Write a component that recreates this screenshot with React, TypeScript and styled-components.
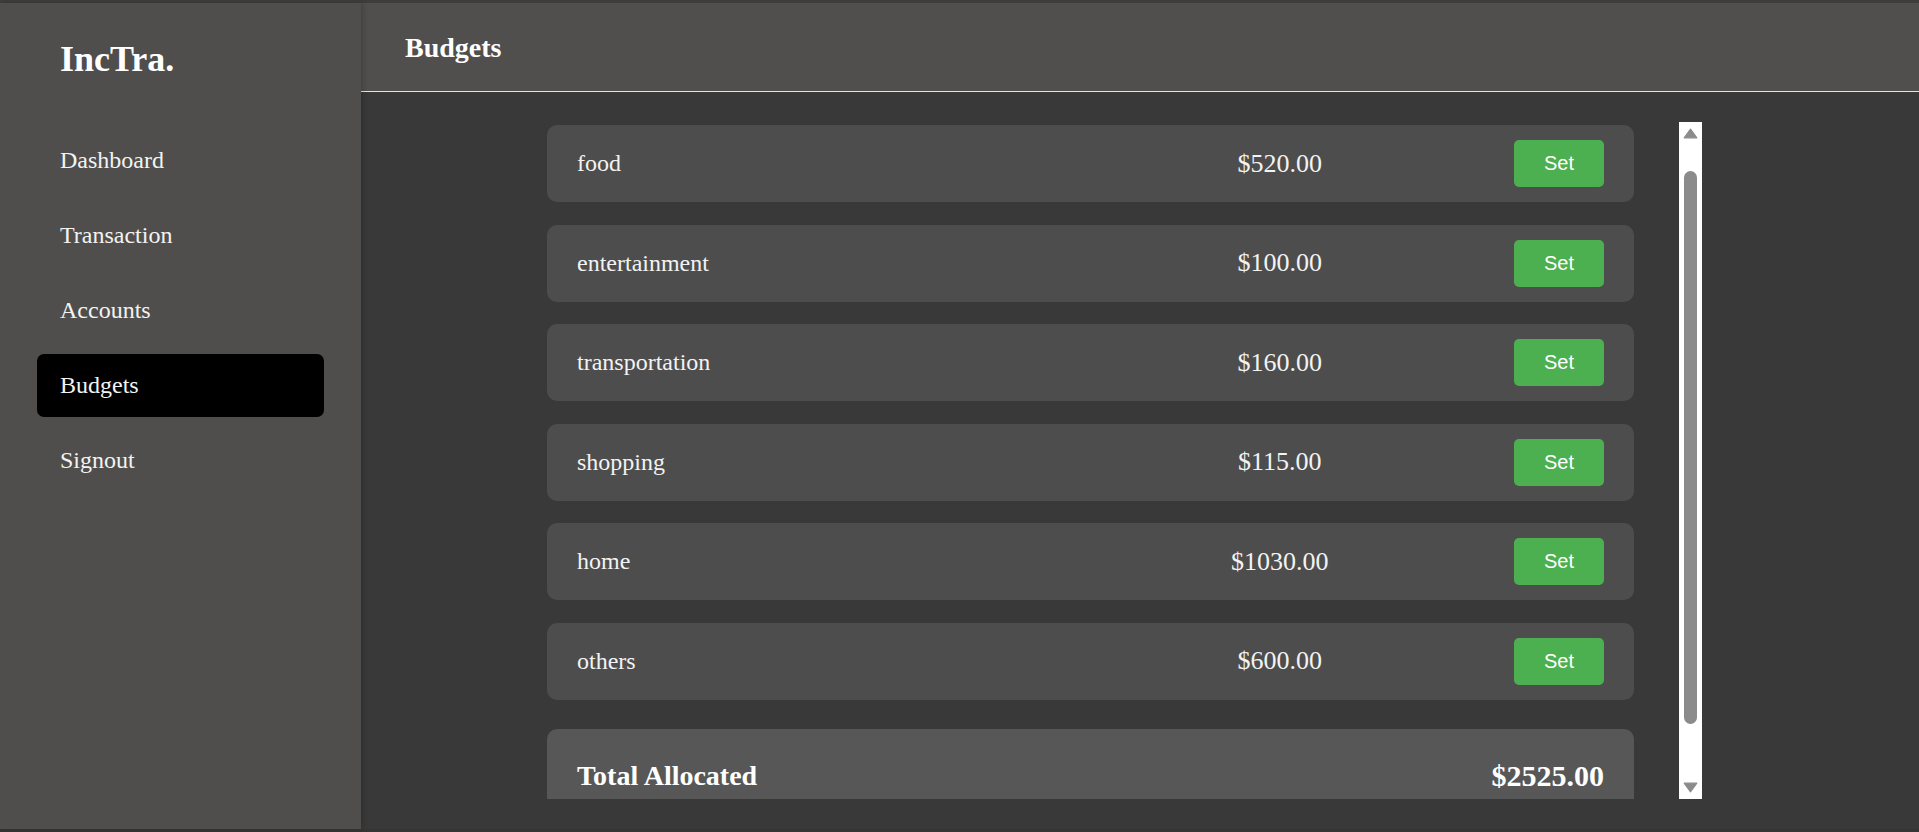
import React, { useEffect, useRef, useState } from 'react';
import styled, { createGlobalStyle } from 'styled-components';

interface Budget {
  category: string;
  amount: number;
}

const budgets: Budget[] = [
  { category: 'food', amount: 520 },
  { category: 'entertainment', amount: 100 },
  { category: 'transportation', amount: 160 },
  { category: 'shopping', amount: 115 },
  { category: 'home', amount: 1030 },
  { category: 'others', amount: 600 },
];

const navItems = ['Dashboard', 'Transaction', 'Accounts', 'Budgets', 'Signout'];

const GlobalStyle = createGlobalStyle`
  html, body {
    margin: 0;
    padding: 0;
    background: #3c3c3c;
    font-family: "Liberation Serif", "Times New Roman", serif;
    overflow: hidden;
  }
  * {
    box-sizing: border-box;
  }
`;

const Frame = styled.div`
  height: 832px;
  display: flex;
  border-top: 3px solid #3d3d3d;
  border-bottom: 3px solid #353535;
`;

const Sidebar = styled.aside`
  width: 361px;
  flex-shrink: 0;
  background: #4f4e4c;
  padding: 36px 37px 0 37px;
  box-shadow: 2px 0 5px rgba(0, 0, 0, 0.18);
  position: relative;
  z-index: 1;
`;

const Logo = styled.div`
  font-size: 36px;
  font-weight: bold;
  color: #ffffff;
  line-height: 40px;
  padding-left: 23px;
  margin-bottom: 50px;
`;

const NavList = styled.nav`
  display: flex;
  flex-direction: column;
  gap: 12.3px;
`;

const NavItem = styled.div<{ active?: boolean }>`
  height: 62.7px;
  display: flex;
  align-items: center;
  padding-left: 23px;
  border-radius: 7px;
  font-size: 24px;
  color: #f3f3f3;
  background: ${(props) => (props.active ? '#000000' : 'transparent')};
  cursor: pointer;
`;

const Main = styled.main`
  flex: 1;
  display: flex;
  flex-direction: column;
  background: #393939;
  min-width: 0;
`;

const Header = styled.header`
  height: 89px;
  flex-shrink: 0;
  display: flex;
  align-items: center;
  padding: 2px 0 0 44px;
  background: #504f4d;
  border-bottom: 1px solid #e4e4e4;
`;

const Title = styled.h1`
  margin: 0;
  font-size: 28px;
  font-weight: bold;
  color: #ffffff;
`;

const Content = styled.div`
  padding: 30px 0 0 186px;
`;

const ScrollWrap = styled.div`
  width: 1155px;
  height: 677px;
  display: flex;
`;

const ScrollArea = styled.div`
  flex: 1;
  height: 100%;
  overflow-y: scroll;
  padding: 35px 45px 39px 0;
  scrollbar-width: none;

  &::-webkit-scrollbar {
    display: none;
  }
`;

const ScrollTrack = styled.div`
  width: 23px;
  flex-shrink: 0;
  display: flex;
  flex-direction: column;
  background: #ffffff;
`;

const ArrowButton = styled.div`
  height: 23px;
  flex-shrink: 0;
  display: flex;
  align-items: center;
  justify-content: center;
`;

const ThumbLane = styled.div`
  flex: 1;
  position: relative;
`;

const Thumb = styled.div`
  position: absolute;
  left: 5px;
  right: 5px;
  background: #8b8b8b;
  border-radius: 7px;
`;

const List = styled.div`
  display: flex;
  flex-direction: column;
  gap: 22.6px;
`;

const Row = styled.div`
  height: 77px;
  display: flex;
  align-items: center;
  padding: 0 30px;
  background: #4d4d4d;
  border-radius: 10px;
  color: #f3f3f3;
`;

const Category = styled.div`
  flex: 1;
  font-size: 24px;
`;

const Amount = styled.div`
  flex: 1;
  text-align: center;
  font-size: 26px;
`;

const SetButton = styled.button`
  width: 90px;
  height: 47px;
  border: none;
  border-radius: 5px;
  background: #4caf50;
  color: #ffffff;
  font-family: "Liberation Sans", Arial, sans-serif;
  font-size: 20px;
  cursor: pointer;
`;

const TotalCard = styled.div`
  margin-top: 6.4px;
  display: flex;
  justify-content: space-between;
  align-items: center;
  padding: 30px 30px;
  background: #575757;
  border-radius: 10px;
  color: #ffffff;
  font-size: 28px;
  font-weight: bold;
`;

const TotalAmount = styled.span`
  font-size: 30px;
`;

const Arrow = ({ up }: { up?: boolean }) => (
  <svg width="15" height="11" viewBox="0 0 15 11">
    <path
      d={up ? 'M7.5 1.2 L13.8 9.8 H1.2 Z' : 'M1.2 1.2 H13.8 L7.5 9.8 Z'}
      fill="#8b8b8b"
      stroke="#8b8b8b"
      strokeWidth="1.2"
      strokeLinejoin="round"
    />
  </svg>
);

const App: React.FC = () => {
  const scrollRef = useRef<HTMLDivElement>(null);
  const [thumb, setThumb] = useState({ top: 0, height: 0 });

  const updateThumb = () => {
    const el = scrollRef.current;
    if (!el) return;
    const lane = el.clientHeight - 46;
    const height = (lane * el.clientHeight) / el.scrollHeight;
    const maxScroll = el.scrollHeight - el.clientHeight;
    const top = maxScroll > 0 ? (el.scrollTop / maxScroll) * (lane - height) : 0;
    setThumb({ top, height });
  };

  useEffect(() => {
    if (scrollRef.current) scrollRef.current.scrollTop = 32;
    updateThumb();
  }, []);

  const total = budgets.reduce((sum, b) => sum + b.amount, 0);

  return (
    <>
      <GlobalStyle />
      <Frame>
        <Sidebar>
          <Logo>IncTra.</Logo>
          <NavList>
            {navItems.map((item) => (
              <NavItem key={item} active={item === 'Budgets'}>
                {item}
              </NavItem>
            ))}
          </NavList>
        </Sidebar>
        <Main>
          <Header>
            <Title>Budgets</Title>
          </Header>
          <Content>
            <ScrollWrap>
              <ScrollArea ref={scrollRef} onScroll={updateThumb}>
                <List>
                  {budgets.map((b) => (
                    <Row key={b.category}>
                      <Category>{b.category}</Category>
                      <Amount>${b.amount.toFixed(2)}</Amount>
                      <SetButton>Set</SetButton>
                    </Row>
                  ))}
                  <TotalCard>
                    <span>Total Allocated</span>
                    <TotalAmount>${total.toFixed(2)}</TotalAmount>
                  </TotalCard>
                </List>
              </ScrollArea>
              <ScrollTrack>
                <ArrowButton>
                  <Arrow up />
                </ArrowButton>
                <ThumbLane>
                  <Thumb style={{ top: thumb.top, height: thumb.height }} />
                </ThumbLane>
                <ArrowButton>
                  <Arrow />
                </ArrowButton>
              </ScrollTrack>
            </ScrollWrap>
          </Content>
        </Main>
      </Frame>
    </>
  );
};

export default App;
